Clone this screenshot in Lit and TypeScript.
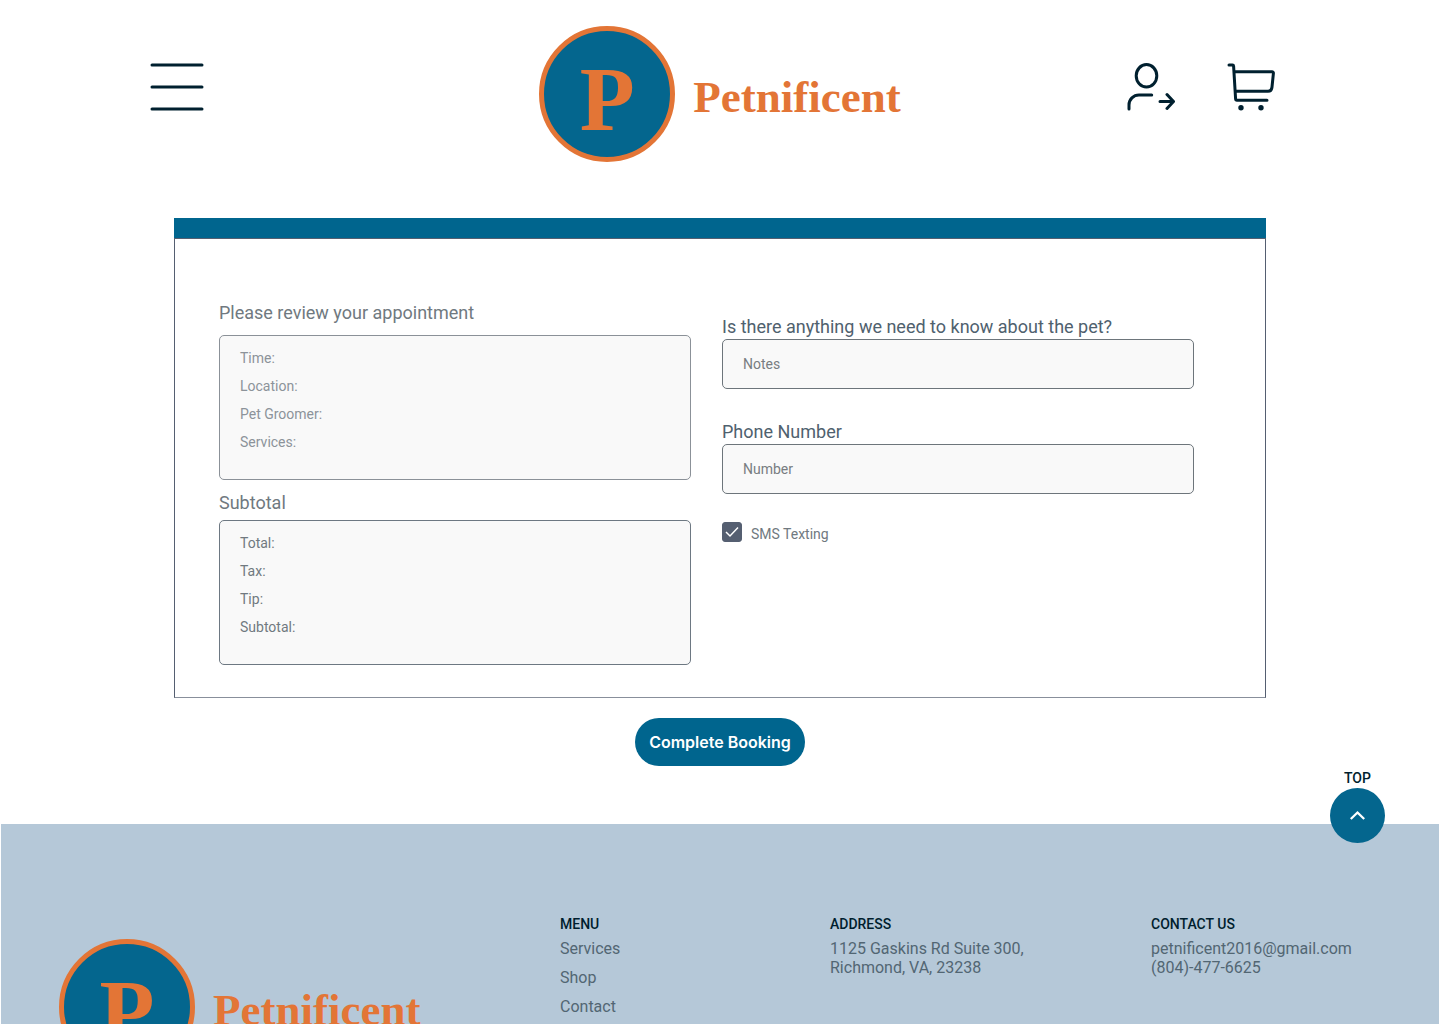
import { LitElement, html, css } from "lit";
import { customElement } from "lit/decorators.js";

@customElement("pet-logo")
export class PetLogo extends LitElement {
  static styles = css`
    :host {
      display: block;
    }
    .logo {
      display: flex;
      align-items: center;
      gap: 18px;
      color: #e37536;
      text-decoration: none;
      font-family: "Liberation Serif", serif;
      font-weight: 700;
    }
    .badge {
      display: flex;
      align-items: center;
      justify-content: center;
      box-sizing: border-box;
      width: 136px;
      height: 136px;
      padding-top: 12px;
      border: 5px solid #e37536;
      border-radius: 50%;
      background: #04668e;
      font-size: 90px;
      line-height: 90px;
    }
    .name {
      font-size: 45px;
      line-height: 50px;
      padding-top: 6px;
    }
  `;

  render() {
    return html`
      <a class="logo" href="#">
        <span class="badge" aria-hidden="true">P</span>
        <span class="name">Petnificent</span>
      </a>
    `;
  }
}

@customElement("app-root")
export class AppRoot extends LitElement {
  static styles = css`
    :host {
      display: block;
      background: #fff;
      color: #707980;
      font-family: Roboto, "Liberation Sans", sans-serif;
      font-size: 14px;
    }
    h2,
    h3,
    dl,
    ul,
    address {
      margin: 0;
      padding: 0;
      font-style: normal;
    }
    .header {
      display: grid;
      grid-template-columns: 1fr auto 1fr;
      align-items: center;
      padding: 26px 150px 56px;
    }
    .tools {
      display: flex;
      gap: 22px;
      padding-bottom: 14px;
    }
    .tools.end {
      justify-content: flex-end;
    }
    .icon-button {
      display: flex;
      padding: 0;
      border: 0;
      background: none;
      color: #00202f;
      cursor: pointer;
    }
    .end .icon-button {
      padding: 0 15px;
    }
    .icon-button svg {
      fill: none;
      stroke: currentColor;
      stroke-width: 3;
      stroke-linecap: round;
      stroke-linejoin: round;
    }
    .icon-button .dot {
      fill: currentColor;
      stroke: none;
    }
    .booking {
      display: flex;
      flex-direction: column;
      align-items: center;
      gap: 20px;
      padding: 0 24px 58px;
    }
    .panel {
      box-sizing: border-box;
      width: 100%;
      max-width: 1092px;
      border: 1px solid #555f71;
      border-top: 0;
      border-bottom-color: #888f9b;
    }
    .panel-bar {
      height: 20px;
      margin: 0 -1px;
      border-bottom: 1px solid #555f71;
      background: #00658e;
    }
    .panel-body {
      display: grid;
      grid-template-columns: 1fr 1fr;
      column-gap: 31px;
      padding: 62px 71px 32px 44px;
    }
    .fields {
      padding-top: 14px;
    }
    .title {
      display: block;
      font-size: 18px;
      font-weight: 400;
      line-height: 24px;
    }
    .summary + .summary {
      padding-top: 11px;
    }
    .summary .title {
      padding-bottom: 10px;
    }
    .summary + .summary .title {
      padding-bottom: 5px;
    }
    .card {
      padding: 8px 20px 23px;
      border: 1px solid #6d7882;
      border-radius: 5px;
      background: #f9f9f9;
      line-height: 28px;
    }
    .card.muted {
      border-color: #8b9198;
      color: #8c939a;
    }
    .field + .field {
      padding-top: 31px;
    }
    .field .title {
      color: #4f616e;
    }
    .input {
      display: block;
      box-sizing: border-box;
      width: 100%;
      height: 50px;
      padding: 0 20px;
      border: 1px solid #6d757b;
      border-radius: 5px;
      background: #f9f9f9;
      color: #4f616e;
      font: inherit;
    }
    .input::placeholder {
      color: #787d81;
      opacity: 1;
    }
    .check {
      display: flex;
      align-items: flex-start;
      gap: 9px;
      padding-top: 28px;
      line-height: 24px;
    }
    .box {
      display: grid;
      width: 20px;
      height: 20px;
    }
    .box input,
    .box svg {
      grid-area: 1 / 1;
      width: 20px;
      height: 20px;
      margin: 0;
    }
    .box input {
      appearance: none;
      border: 1px solid #555f71;
      border-radius: 3px;
    }
    .box input:checked {
      background: #555f71;
    }
    .box svg {
      pointer-events: none;
      fill: none;
      stroke: #fff;
    }
    .submit {
      height: 48px;
      padding: 0 14px;
      border: 0;
      border-radius: 24px;
      background: #00658e;
      color: #fff;
      font-family: Inter, "Liberation Sans", sans-serif;
      font-size: 16px;
      font-weight: 600;
      cursor: pointer;
    }
    .footer {
      position: relative;
      display: grid;
      grid-template-columns: 501fr 270fr 321fr 230fr;
      margin: 0 1px;
      padding: 91px 58px 64px;
      background: #b5c8d8;
      color: #526673;
      font-size: 16px;
      line-height: 19px;
    }
    .footer pet-logo {
      padding-top: 24px;
    }
    .footer h3 {
      padding-bottom: 5px;
      color: #001e2e;
      font-size: 14px;
      font-weight: 500;
      line-height: 19px;
    }
    .footer ul {
      display: grid;
      gap: 10px;
      list-style: none;
    }
    .footer li a,
    .footer address a {
      color: inherit;
      text-decoration: none;
    }
    .top {
      position: absolute;
      top: -56px;
      right: 54px;
      display: flex;
      flex-direction: column;
      align-items: center;
      color: #001e2e;
      font-size: 14px;
      font-weight: 500;
      line-height: 20px;
      text-decoration: none;
    }
    .top svg {
      display: block;
    }
  `;

  private summary(title: string, rows: string[], muted = false) {
    return html`
      <section class="summary">
        <h2 class="title">${title}</h2>
        <dl class="card ${muted ? "muted" : ""}">
          ${rows.map((row) => html`<dt>${row}:</dt>`)}
        </dl>
      </section>
    `;
  }

  private field(id: string, label: string, placeholder: string, type: string) {
    return html`
      <div class="field">
        <label class="title" for=${id}>${label}</label>
        <input class="input" id=${id} type=${type} placeholder=${placeholder} />
      </div>
    `;
  }

  render() {
    return html`
      <header class="header" id="page-top">
        <div class="tools">
          <button class="icon-button" type="button" aria-label="Menu">
            <svg width="54" height="48" viewBox="0 0 54 48">
              <path d="M2 2h50M2 24h50M2 46h50" />
            </svg>
          </button>
        </div>
        <pet-logo></pet-logo>
        <div class="tools end">
          <button class="icon-button" type="button" aria-label="Sign in">
            <svg width="48" height="48" viewBox="0 0 48 48">
              <ellipse cx="19.5" cy="12.8" rx="10.3" ry="11.2" />
              <path d="M2 46v-4a10 10 0 0 1 10-10h12.700M33 38.500h13M40 31.500l6.500 7-6.500 7" />
            </svg>
          </button>
          <button class="icon-button" type="button" aria-label="Cart">
            <svg width="48" height="48" viewBox="0 0 48 48">
              <path
                d="M2 2h3.500q1 0 1.100 1.100L8.600 36q.1 1.300 1.400 1.300h30M7.500 8.800h37.500q1.500 0 1.400 1.500L45 24q-.5 4.300-4 4.300H8.500"
              />
              <circle class="dot" cx="14" cy="44.700" r="2.700" />
              <circle class="dot" cx="34" cy="44.700" r="2.700" />
            </svg>
          </button>
        </div>
      </header>

      <form class="booking" @submit=${(e: Event) => e.preventDefault()}>
        <div class="panel">
          <div class="panel-bar"></div>
          <div class="panel-body">
            <div>
              ${this.summary(
                "Please review your appointment",
                ["Time", "Location", "Pet Groomer", "Services"],
                true
              )}
              ${this.summary("Subtotal", ["Total", "Tax", "Tip", "Subtotal"])}
            </div>
            <div class="fields">
              ${this.field("notes", "Is there anything we need to know about the pet?", "Notes", "text")}
              ${this.field("phone", "Phone Number", "Number", "tel")}
              <label class="check">
                <span class="box">
                  <input type="checkbox" checked />
                  <svg viewBox="0 0 20 20" stroke-width="1.500"><path d="M4 10l4 4 8-8.500" /></svg>
                </span>
                SMS Texting
              </label>
            </div>
          </div>
        </div>
        <button class="submit" type="submit">Complete Booking</button>
      </form>

      <footer class="footer">
        <a class="top" href="#page-top">
          TOP
          <svg width="55" height="55" viewBox="0 0 55 55" aria-hidden="true">
            <circle cx="27.500" cy="27.500" r="27.500" fill="#04668e" />
            <path d="M20.800 31l6.700-6.500 6.700 6.500" fill="none" stroke="#fff" stroke-width="2.300" />
          </svg>
        </a>
        <pet-logo></pet-logo>
        <nav>
          <h3>MENU</h3>
          <ul>
            <li><a href="#">Services</a></li>
            <li><a href="#">Shop</a></li>
            <li><a href="#">Contact</a></li>
          </ul>
        </nav>
        <section>
          <h3>ADDRESS</h3>
          <address>1125 Gaskins Rd Suite 300,<br />Richmond, VA, 23238</address>
        </section>
        <section>
          <h3>CONTACT US</h3>
          <address>
            <a href="mailto:petnificent2016@gmail.com">petnificent2016@gmail.com</a><br />
            <a href="tel:8044776625">(804)-477-6625</a>
          </address>
        </section>
      </footer>
    `;
  }
}
